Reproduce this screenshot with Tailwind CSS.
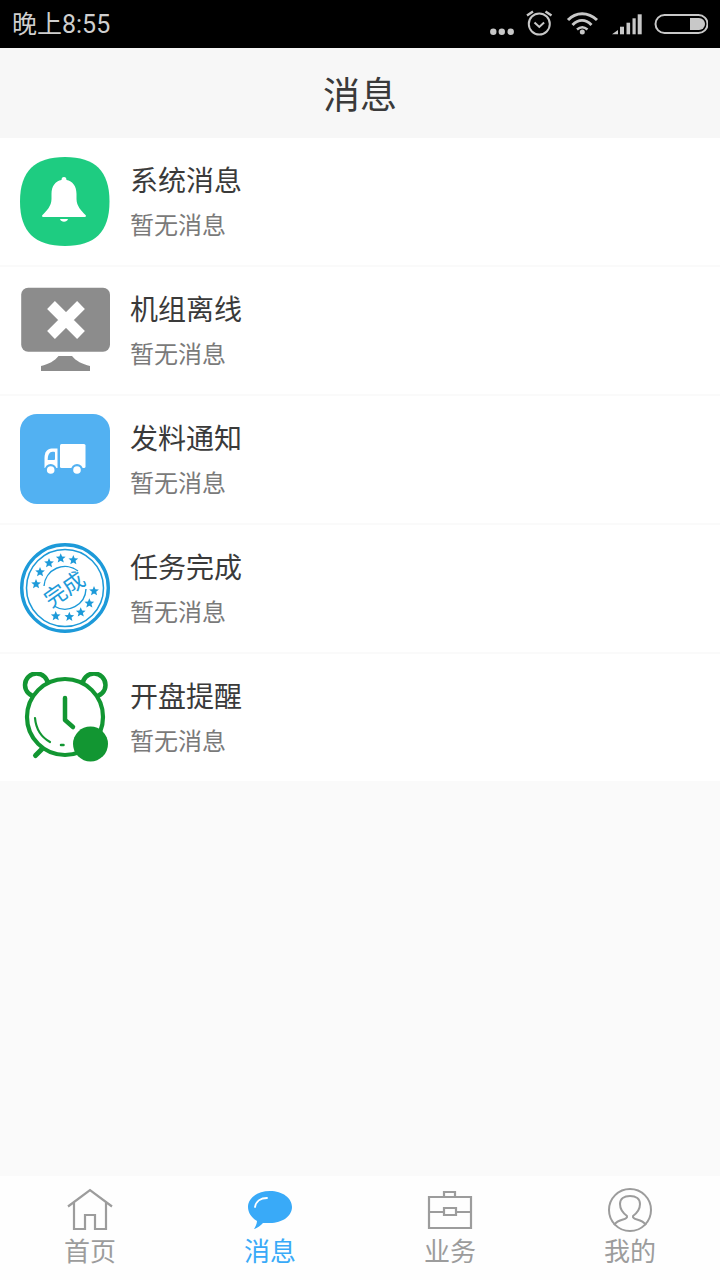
<!DOCTYPE html>
<html>

<head>
    <meta charset="UTF-8">
    <title>消息</title>
    <script src="https://cdn.jsdelivr.net/npm/@tailwindcss/browser@4"></script>
</head>

<body class="font-['Roboto','Noto_Sans_CJK_SC',sans-serif]">
    <div class="w-[720px] h-[1280px] flex flex-col bg-[#fafafa] overflow-hidden">

        <!-- status bar -->
        <div class="h-12 shrink-0 bg-black flex items-center justify-between px-3">
            <span class="pt-[2px] text-[25px] leading-[46px] text-[#cfcfcf]">晚上8:55</span>
            <svg width="230" height="48" viewBox="0 0 230 48" fill="none">
                <circle cx="15.300" cy="31.700" r="3.200" fill="#c8c8c8" />
                <circle cx="23.800" cy="31.700" r="3.200" fill="#c8c8c8" />
                <circle cx="32.700" cy="31.700" r="3.200" fill="#c8c8c8" />
                <circle cx="61.300" cy="24" r="10.500" stroke="#c8c8c8" stroke-width="2" />
                <path d="M56.500 22.500l4.800 4.500 4.800-4.500" stroke="#c8c8c8" stroke-width="2" />
                <path d="M49 15.500l6-4M73.500 15.500l-6-4" stroke="#c8c8c8" stroke-width="2.400" />
                <path d="M90 20c8-8.500 20-8.500 29 0" stroke="#c8c8c8" stroke-width="3" />
                <path d="M94.500 25c6-6 13-6 19 0" stroke="#c8c8c8" stroke-width="3" />
                <path d="M99 29.500c3.500-3 7-3 10.500 0" stroke="#c8c8c8" stroke-width="2.500" />
                <circle cx="104.300" cy="32" r="2.500" fill="#c8c8c8" />
                <path d="M134 34.300h6V30z" fill="#c8c8c8" />
                <rect x="142" y="26.700" width="4" height="7.600" fill="#c8c8c8" />
                <rect x="148.500" y="22.700" width="3.600" height="11.600" fill="#c8c8c8" />
                <rect x="154.500" y="18.300" width="3.200" height="16" fill="#c8c8c8" />
                <rect x="159.700" y="14.300" width="4" height="20" fill="#c8c8c8" />
                <rect x="177.500" y="15" width="52" height="18" rx="9" stroke="#c8c8c8" stroke-width="2" />
                <path d="M212 18h9a6 6 0 0 1 0 12h-9z" fill="#c8c8c8" />
            </svg>
        </div>

        <!-- title -->
        <div class="h-[90px] shrink-0 bg-[#f7f7f7] flex items-center justify-center pt-[6px]">
            <span class="text-[37px] leading-none text-[#3a3a3a]">消息</span>
        </div>

        <!-- list -->
        <div class="flex flex-col gap-[2px] bg-[#fafafa]">
            <div class="h-[127px] bg-white flex items-center pl-5">
                <svg class="shrink-0 self-start mt-[18px]" width="90" height="90" viewBox="0 0 90 90">
                    <path d="M45 1C75 1 89.500 15 89.500 45.500S75 90 45 90 0 76 0 45.500 15 1 45 1z" fill="#1ecc81" />
                    <path d="M44 21c-1.700 0-2.500 1-2.500 3-6 1-10 6-10 14v5c0 7-5 12-9 16-1 1-.5 2 1 2h41c1.500 0 2-1 1-2-4-4-9-9-9-16v-5c0-8-4-13-10-14 0-2-.8-3-2.500-3z" fill="white" />
                    <path d="M40 63h8c-1 3.500-7 3.500-8 0z" fill="white" />
                </svg>
                <div class="ml-5 flex flex-col">
                    <span class="text-[28px] leading-[42px] text-[#3a3a3a]">系统消息</span>
                    <span class="mt-[6px] text-[24px] leading-[34px] text-[#7a7a7a]">暂无消息</span>
                </div>
            </div>

            <div class="h-[127px] bg-white flex items-center pl-5">
                <svg class="shrink-0 self-start mt-[18px]" width="90" height="90" viewBox="0 0 90 90">
                    <rect x="1.200" y="2.700" width="88.800" height="64" rx="7" fill="#8c8c8c" />
                    <path d="M38.500 71H52c4 5 10 8 18 10v5H21v-5c8-2 13.500-5 17.500-10z" fill="#8c8c8c" />
                    <path d="M31 20l30 30M61 20L31 50" stroke="white" stroke-width="11" fill="none" />
                </svg>
                <div class="ml-5 flex flex-col">
                    <span class="text-[28px] leading-[42px] text-[#3a3a3a]">机组离线</span>
                    <span class="mt-[6px] text-[24px] leading-[34px] text-[#7a7a7a]">暂无消息</span>
                </div>
            </div>

            <div class="h-[127px] bg-white flex items-center pl-5">
                <svg class="shrink-0 self-start mt-[18px]" width="90" height="90" viewBox="0 0 90 90">
                    <rect width="90" height="90" rx="17" fill="#52b1f2" />
                    <rect x="40" y="30" width="25.500" height="24" rx="1.500" fill="white" />
                    <path d="M37.500 34.500V54h-13V44c0-6 3-9.500 7-9.500z" fill="white" />
                    <path d="M27.700 46H34a1 1 0 0 0 1-1v-6.300a1 1 0 0 0-1-1h-1.500c-3 0-4.800 3-4.800 8.300z" fill="#52b1f2" />
                    <circle cx="30.700" cy="56" r="6" fill="#52b1f2" />
                    <circle cx="57" cy="56" r="6" fill="#52b1f2" />
                    <circle cx="30.700" cy="56" r="3.800" fill="white" />
                    <circle cx="57" cy="56" r="3.800" fill="white" />
                </svg>
                <div class="ml-5 flex flex-col">
                    <span class="text-[28px] leading-[42px] text-[#3a3a3a]">发料通知</span>
                    <span class="mt-[6px] text-[24px] leading-[34px] text-[#7a7a7a]">暂无消息</span>
                </div>
            </div>

            <div class="h-[127px] bg-white flex items-center pl-5">
                <div class="relative w-[90px] h-[90px] shrink-0 self-start mt-[18px]">
                    <svg width="90" height="90" viewBox="0 0 90 90" fill="none">
                        <defs>
                            <path id="star" d="M0-5l1.400 3.300 3.500.2-2.700 2.300.9 3.400L0 2.400l-3 1.800.9-3.400-2.700-2.300 3.500-.2z" fill="#1d9ad9" />
                        </defs>
                        <circle cx="45" cy="45" r="43.300" stroke="#1d9ad9" stroke-width="3.400" />
                        <circle cx="45" cy="45" r="38.500" stroke="#1d9ad9" stroke-width="1.500" />
                        <path d="M24 43A21 21 0 0 1 58 28M66 46A21 21 0 0 1 34 63" stroke="#1d9ad9" stroke-width="1.400" />
                        <use href="#star" x="16" y="41" />
                        <use href="#star" x="20" y="29" />
                        <use href="#star" x="29" y="20" />
                        <use href="#star" x="40.700" y="15.300" />
                        <use href="#star" x="53.300" y="17" />
                        <use href="#star" x="74" y="48" />
                        <use href="#star" x="69.300" y="60.300" />
                        <use href="#star" x="60.700" y="69.300" />
                        <use href="#star" x="49.300" y="73.700" />
                        <use href="#star" x="35.700" y="73" />
                    </svg>
                    <div class="absolute inset-0 flex items-center justify-center pt-[3px]">
                        <span class="text-[22px] leading-[28px] text-[#1d9ad9] -rotate-[35deg]">完成</span>
                    </div>
                </div>
                <div class="ml-5 flex flex-col">
                    <span class="text-[28px] leading-[42px] text-[#3a3a3a]">任务完成</span>
                    <span class="mt-[6px] text-[24px] leading-[34px] text-[#7a7a7a]">暂无消息</span>
                </div>
            </div>

            <div class="h-[127px] bg-white flex items-center pl-5">
                <svg class="shrink-0 self-start mt-[18px]" width="90" height="90" viewBox="0 0 90 90" fill="none">
                    <circle cx="16.500" cy="13" r="11.500" stroke="#129632" stroke-width="4.500" />
                    <circle cx="74" cy="13" r="11.500" stroke="#129632" stroke-width="4.500" />
                    <circle cx="45" cy="45" r="38" fill="white" stroke="#129632" stroke-width="4.200" />
                    <path d="M45 26v22l8 7" stroke="#129632" stroke-width="4.500" stroke-linecap="round" stroke-linejoin="round" />
                    <path d="M15 46c1 11 6 19 15 24" stroke="#129632" stroke-width="2.200" stroke-linecap="round" />
                    <path d="M41 73h2.500" stroke="#129632" stroke-width="2.500" stroke-linecap="round" />
                    <path d="M22 77l-6.500 6.500" stroke="#129632" stroke-width="5" stroke-linecap="round" />
                    <circle cx="70.500" cy="72" r="17.500" fill="#129632" />
                </svg>
                <div class="ml-5 flex flex-col">
                    <span class="text-[28px] leading-[42px] text-[#3a3a3a]">开盘提醒</span>
                    <span class="mt-[6px] text-[24px] leading-[34px] text-[#7a7a7a]">暂无消息</span>
                </div>
            </div>
        </div>

        <div class="flex-1"></div>

        <!-- tab bar -->
        <div class="h-[104px] shrink-0 bg-[#fefefe] grid grid-cols-4">
            <div class="flex flex-col items-center pt-[12px]">
                <svg width="46" height="44" viewBox="0 0 46 44" fill="none" stroke="#9c9c9c" stroke-width="2.200">
                    <path d="M1 18.500L23 2l22 16.500M7 14v27h11V27h10v14h11V14" />
                </svg>
                <span class="mt-[5px] text-[26px] leading-[30px] text-[#9c9c9c]">首页</span>
            </div>
            <div class="flex flex-col items-center pt-[12px]">
                <svg width="46" height="44" viewBox="0 0 46 44">
                    <path d="M23 3c12.500 0 22 7 22 16s-9.500 16-22 16c-3 0-5 0-7 0-2 2-5.500 5-9 6 1-1.500 3-5 3-8C5 30 1 25 1 19 1 10 10.500 3 23 3z" fill="#39aaf8" />
                    <path d="M8 19c1-6 6-9 12-9" stroke="white" stroke-width="1.800" fill="none" stroke-linecap="round" />
                </svg>
                <span class="mt-[5px] text-[26px] leading-[30px] text-[#39aaf8]">消息</span>
            </div>
            <div class="flex flex-col items-center pt-[12px]">
                <svg width="46" height="44" viewBox="0 0 46 44" fill="none" stroke="#9c9c9c" stroke-width="2.200">
                    <path d="M2 9h42v31H2zM2 24h15M29 24h15M17 20h12v7H17zM17 9V4h11v5" />
                </svg>
                <span class="mt-[5px] text-[26px] leading-[30px] text-[#9c9c9c]">业务</span>
            </div>
            <div class="flex flex-col items-center pt-[12px]">
                <svg width="46" height="44" viewBox="0 0 46 44" fill="none" stroke="#9c9c9c" stroke-width="2">
                    <circle cx="23" cy="22" r="21" />
                    <path d="M7 37c2-3 5-4.500 9-5.500 3-.8 4.500-2 4-3.500-4-3-7-7-7-12 0-5 4-8 10-8s10 3 10 8c0 5-3 9-7 12-.5 1.500 1 2.700 4 3.500 4 1 7 2.500 9 5.500" />
                </svg>
                <span class="mt-[5px] text-[26px] leading-[30px] text-[#9c9c9c]">我的</span>
            </div>
        </div>
    </div>
</body>

</html>
